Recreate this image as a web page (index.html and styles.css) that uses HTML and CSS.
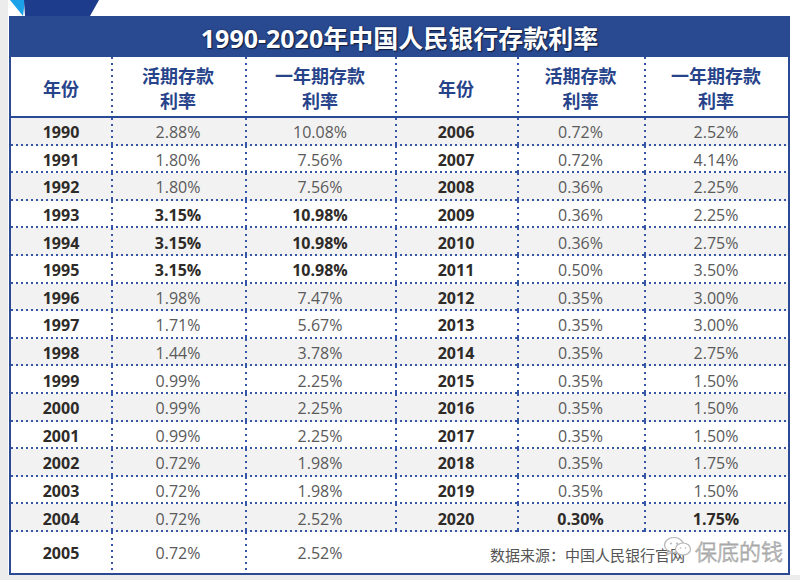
FILE: index.html
```html
<!DOCTYPE html>
<html lang="zh">
<head>
<meta charset="utf-8">
<title>1990-2020年中国人民银行存款利率</title>
<link rel="stylesheet" href="styles.css">
</head>
<body>
<div class="page">
  <div class="band">
    <svg class="logo" width="110" height="16" viewBox="0 0 110 16">
      <polygon points="10,0 25,0 23,16" fill="#1ba3ea"/>
      <polygon points="24,0 99,0 90,16 25,16" fill="#1d3c8c"/>
    </svg>
  </div>
  <div class="table">
    <div class="title">1990-2020年中国人民银行存款利率</div>

    <div class="h">年份</div>
    <div class="h v">活期存款<br>利率</div>
    <div class="h v">一年期存款<br>利率</div>
    <div class="h v">年份</div>
    <div class="h v">活期存款<br>利率</div>
    <div class="h v">一年期存款<br>利率</div>

    <div class="row alt"><div class="c y">1990</div><div class="c v">2.88%</div><div class="c v">10.08%</div><div class="c v y">2006</div><div class="c v">0.72%</div><div class="c v">2.52%</div></div>
    <div class="row"><div class="c y">1991</div><div class="c v">1.80%</div><div class="c v">7.56%</div><div class="c v y">2007</div><div class="c v">0.72%</div><div class="c v">4.14%</div></div>
    <div class="row alt"><div class="c y">1992</div><div class="c v">1.80%</div><div class="c v">7.56%</div><div class="c v y">2008</div><div class="c v">0.36%</div><div class="c v">2.25%</div></div>
    <div class="row"><div class="c y">1993</div><div class="c v b">3.15%</div><div class="c v b">10.98%</div><div class="c v y">2009</div><div class="c v">0.36%</div><div class="c v">2.25%</div></div>
    <div class="row alt"><div class="c y">1994</div><div class="c v b">3.15%</div><div class="c v b">10.98%</div><div class="c v y">2010</div><div class="c v">0.36%</div><div class="c v">2.75%</div></div>
    <div class="row"><div class="c y">1995</div><div class="c v b">3.15%</div><div class="c v b">10.98%</div><div class="c v y">2011</div><div class="c v">0.50%</div><div class="c v">3.50%</div></div>
    <div class="row alt"><div class="c y">1996</div><div class="c v">1.98%</div><div class="c v">7.47%</div><div class="c v y">2012</div><div class="c v">0.35%</div><div class="c v">3.00%</div></div>
    <div class="row"><div class="c y">1997</div><div class="c v">1.71%</div><div class="c v">5.67%</div><div class="c v y">2013</div><div class="c v">0.35%</div><div class="c v">3.00%</div></div>
    <div class="row alt"><div class="c y">1998</div><div class="c v">1.44%</div><div class="c v">3.78%</div><div class="c v y">2014</div><div class="c v">0.35%</div><div class="c v">2.75%</div></div>
    <div class="row"><div class="c y">1999</div><div class="c v">0.99%</div><div class="c v">2.25%</div><div class="c v y">2015</div><div class="c v">0.35%</div><div class="c v">1.50%</div></div>
    <div class="row alt"><div class="c y">2000</div><div class="c v">0.99%</div><div class="c v">2.25%</div><div class="c v y">2016</div><div class="c v">0.35%</div><div class="c v">1.50%</div></div>
    <div class="row"><div class="c y">2001</div><div class="c v">0.99%</div><div class="c v">2.25%</div><div class="c v y">2017</div><div class="c v">0.35%</div><div class="c v">1.50%</div></div>
    <div class="row alt"><div class="c y">2002</div><div class="c v">0.72%</div><div class="c v">1.98%</div><div class="c v y">2018</div><div class="c v">0.35%</div><div class="c v">1.75%</div></div>
    <div class="row"><div class="c y">2003</div><div class="c v">0.72%</div><div class="c v">1.98%</div><div class="c v y">2019</div><div class="c v">0.35%</div><div class="c v">1.50%</div></div>
    <div class="row alt"><div class="c y">2004</div><div class="c v">0.72%</div><div class="c v">2.52%</div><div class="c v y">2020</div><div class="c v b">0.30%</div><div class="c v b">1.75%</div></div>

    <div class="row last">
      <div class="l y">2005</div><div class="l v">0.72%</div><div class="l v">2.52%</div>
      <div class="source">
        <span class="src-text">数据来源：中国人民银行官网</span>
        <div class="wm">
          <svg class="wm-icon" width="30" height="22" viewBox="0 0 30 22">
            <ellipse cx="11" cy="9" rx="9.5" ry="7.5" fill="none" stroke="#b5b5b5" stroke-width="1.2"/>
            <path d="M5 15 L3.5 19 L9 16.3" fill="none" stroke="#b5b5b5" stroke-width="1.2"/>
            <ellipse cx="20" cy="13" rx="7.5" ry="6" fill="#fff" stroke="#b5b5b5" stroke-width="1.2"/>
            <circle cx="8" cy="7.5" r="1" fill="#b5b5b5"/>
            <circle cx="14" cy="7.5" r="1" fill="#b5b5b5"/>
            <circle cx="17.5" cy="12" r="0.8" fill="#b5b5b5"/>
            <circle cx="22.5" cy="12" r="0.8" fill="#b5b5b5"/>
          </svg>
          <span class="wm-text">保底的钱</span>
        </div>
      </div>
    </div>
  </div>
</div>
</body>
</html>
```

FILE: styles.css
```css
html, body {
  margin: 0;
  padding: 0;
}

body {
  background: #ececec;
  font-family: "Open Sans", "Noto Sans CJK SC", sans-serif;
  height: 580px;
  overflow: hidden;
}

.page {
  margin-left: 8px;
  background: #ffffff;
  padding: 0 10px 0 1px;
  height: 575px;
}

.band {
  height: 16px;
  overflow: hidden;
}

.logo {
  display: block;
  margin-left: -9px;
}

.table {
  display: grid;
  grid-template-columns: 100px 134px 150px 122px 127px 144px;
  grid-template-rows: 41px 61px repeat(15, 27.6px) 41px;
  border: 2px solid #2a4a95;
  border-top: 0;
}

.title {
  grid-column: 1 / -1;
  margin: 0 -2px;
  background: #294a91;
  color: #ffffff;
  font-family: "Open Sans", "Noto Sans CJK SC", sans-serif;
  font-weight: 700;
  font-size: 25px;
  display: flex;
  align-items: center;
  justify-content: center;
  text-shadow: 1px 1px 1px #101d40, 0 0 2px #14244d;
}

.h {
  display: flex;
  align-items: center;
  justify-content: center;
  text-align: center;
  font-family: "Noto Sans CJK SC", sans-serif;
  font-weight: 700;
  font-size: 18px;
  line-height: 25px;
  color: #27438a;
  border-bottom: 2px solid #2a4a95;
  padding-top: 3px;
}

.h.v {
  background-image: linear-gradient(180deg, #3556a6 2px, transparent 2px);
  background-size: 2px 6px;
  background-repeat: repeat-y;
  background-position: 0 0;
}

.row {
  display: contents;
}

.c, .l {
  display: flex;
  align-items: center;
  justify-content: center;
  font-size: 16px;
  color: #5a5a5a;
  padding-top: 1px;
}

.c {
  background-image: linear-gradient(90deg, #3556a6 2px, transparent 2px);
  background-size: 5px 2px;
  background-repeat: repeat-x;
  background-position: 0 100%;
}

.c.v {
  background-image: linear-gradient(90deg, #3556a6 2px, transparent 2px),
    linear-gradient(180deg, #3556a6 2px, transparent 2px);
  background-size: 5px 2px, 2px 6px;
  background-repeat: repeat-x, repeat-y;
  background-position: 0 100%, 0 0;
}

.l.v {
  background-image: linear-gradient(180deg, #3556a6 2px, transparent 2px);
  background-size: 2px 6px;
  background-repeat: repeat-y;
  background-position: 0 0;
}

.alt .c {
  background-color: #f2f2f2;
}

.y {
  font-weight: 700;
  color: #2e2b28;
}

.b {
  font-weight: 700;
  color: #2e2b28;
}

.source {
  grid-column: 4 / 7;
  position: relative;
  display: flex;
  align-items: center;
  justify-content: center;
}

.src-text {
  font-family: "Noto Sans CJK SC", sans-serif;
  font-size: 15px;
  color: #555555;
  margin-left: -8px;
  margin-top: 4px;
}

.wm {
  position: absolute;
  left: 268px;
  top: 0;
  width: 130px;
  height: 40px;
}

.wm-icon {
  position: absolute;
  left: 0;
  top: 4px;
}

.wm-text {
  position: absolute;
  left: 32px;
  top: 2px;
  font-family: "Noto Sans CJK SC", sans-serif;
  font-weight: 300;
  font-size: 22px;
  color: rgba(255, 255, 255, 0.55);
  -webkit-text-stroke: 0.8px #a8a8a8;
}
```
